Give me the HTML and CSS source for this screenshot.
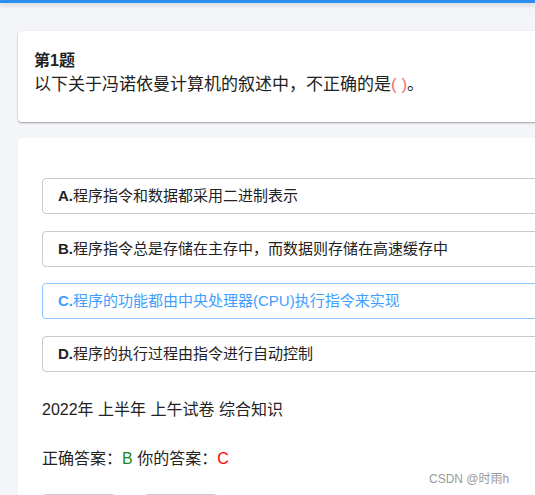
FILE: index.html
```html
<!DOCTYPE html>
<html lang="zh-CN">
<head>
<meta charset="utf-8">
<title>第1题</title>
<link rel="stylesheet" href="styles.css">
</head>
<body>
<div class="topbar"></div>
<main class="page">
  <section class="card question-card">
    <div class="q-title">第1题</div>
    <div class="q-text">以下关于冯诺依曼计算机的叙述中，不正确的是<span class="paren">( )</span>。</div>
  </section>
  <section class="card answer-card">
    <div class="options">
      <div class="option"><b>A.</b>程序指令和数据都采用二进制表示</div>
      <div class="option"><b>B.</b>程序指令总是存储在主存中，而数据则存储在高速缓存中</div>
      <div class="option selected"><b>C.</b>程序的功能都由中央处理器(CPU)执行指令来实现</div>
      <div class="option"><b>D.</b>程序的执行过程由指令进行自动控制</div>
    </div>
    <div class="meta">2022年 上半年 上午试卷 综合知识</div>
    <div class="result">正确答案：<span class="right">B</span> 你的答案：<span class="wrong">C</span></div>
    <div class="buttons">
      <button class="btn">上一题</button>
      <button class="btn">下一题</button>
    </div>
  </section>
</main>
<div class="watermark">CSDN @时雨h</div>
</body>
</html>
```

FILE: styles.css
```css
html, body {
  margin: 0;
  padding: 0;
}
body {
  background: #f4f5f9;
  font-family: "Liberation Sans", "Noto Sans CJK SC", sans-serif;
  color: #303133;
  width: 535px;
  height: 495px;
  overflow: hidden;
  position: relative;
}
.topbar {
  height: 3px;
  background: #2d8cf0;
  box-shadow: 0 2px 5px rgba(0, 0, 0, 0.18);
}
.page {
  padding: 28px 0 0 18px;
  width: 600px;
}
.card {
  background: #fff;
  border-radius: 4px;
}
.question-card {
  padding: 18px 16px 25px;
  box-shadow: 0 1px 2px rgba(0, 0, 0, 0.35);
  margin-bottom: 16px;
}
.q-title {
  font-size: 16px;
  font-weight: bold;
  line-height: 24px;
  color: #222;
}
.q-text {
  font-size: 17px;
  line-height: 24px;
  color: #222;
}
.paren {
  color: #f56c6c;
}
.answer-card {
  padding: 40px 24px 0;
}
.options {
  display: flex;
  flex-direction: column;
  gap: 16.7px;
}
.option {
  height: 34px;
  border: 1px solid #c8c9cc;
  border-radius: 4px;
  padding-left: 15px;
  font-size: 15px;
  line-height: 34px;
  color: #222;
}
.option b {
  font-weight: bold;
}
.option.selected {
  border-color: #8cc5ff;
  color: #409eff;
}
.meta {
  margin-top: 26px;
  font-size: 16px;
  line-height: 24px;
  color: #222;
}
.result {
  margin-top: 25px;
  font-size: 16px;
  line-height: 24px;
  color: #222;
}
.right {
  color: #1a8a1a;
}
.wrong {
  color: #ff0000;
}
.buttons {
  display: flex;
  gap: 28px;
  margin-top: 23px;
}
.btn {
  width: 74px;
  height: 32px;
  border: 1px solid #c8c9cc;
  border-radius: 4px;
  background: #fff;
  font-family: inherit;
  font-size: 14px;
  color: #303133;
}
.watermark {
  position: absolute;
  left: 429px;
  top: 470px;
  font-size: 12px;
  line-height: 18px;
  color: #9a9a9a;
}
```
